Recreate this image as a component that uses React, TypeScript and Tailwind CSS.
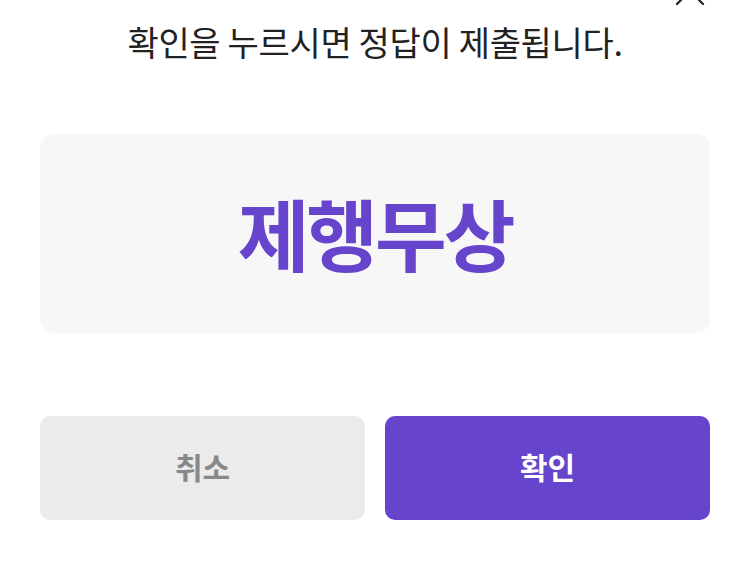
const font = { fontFamily: '"Noto Sans CJK KR", "Noto Sans", sans-serif' };

export default function App() {
  return (
    <div className="w-[750px] h-[562px] bg-white overflow-hidden relative" style={font}>
      <button className="absolute left-[675px] top-[-24px] text-[#222]">
        <svg width="30" height="30" viewBox="0 0 30 30" fill="none" stroke="currentColor" strokeWidth="2.2" strokeLinecap="round">
          <path d="M2 2 L28 28 M28 2 L2 28" />
        </svg>
      </button>

      <div className="flex flex-col px-10">
        <p className="mt-[18px] h-[48px] text-center text-[34px] leading-[48px] text-[#222] tracking-[-0.01em]">
          확인을 누르시면 정답이 제출됩니다.
        </p>

        <div className="mt-[68px] h-[199px] rounded-[14px] bg-[#f7f7f8] flex items-center justify-center">
          <span className="text-[78px] font-bold text-[#6644cc] tracking-[-0.04em] leading-none -mt-[4px]">제행무상</span>
        </div>

        <div className="mt-[83px] flex gap-5">
          <button className="flex-1 h-[104px] pb-[4px] rounded-[10px] bg-[#ebebeb] text-[#888] text-[30px] font-bold">
            취소
          </button>
          <button className="flex-1 h-[104px] pb-[4px] rounded-[10px] bg-[#6644cc] text-white text-[30px] font-bold">
            확인
          </button>
        </div>
      </div>
    </div>
  );
}
